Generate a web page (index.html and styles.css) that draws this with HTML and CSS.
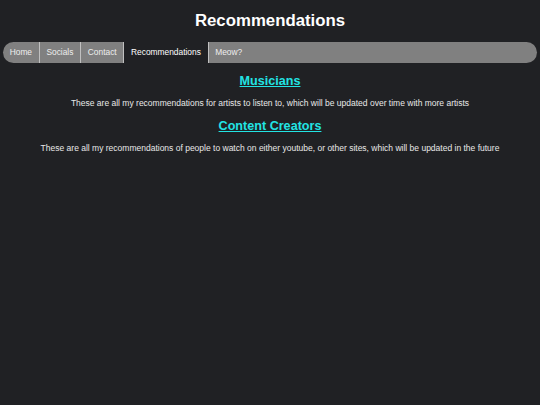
FILE: index.html
```html
<!DOCTYPE html>
<html>
<head>
<meta charset="utf-8">
<title>Recommendations</title>
<link rel="stylesheet" href="styles.css">
</head>
<body>
<h1 class="title">Recommendations</h1>
<ul class="nav">
  <li class="nav-item"><a href="#">Home</a></li>
  <li class="nav-item"><a href="#">Socials</a></li>
  <li class="nav-item"><a href="#">Contact</a></li>
  <li class="nav-item active"><a href="#">Recommendations</a></li>
  <li class="nav-item last"><a href="#">Meow?</a></li>
</ul>
<main class="content">
  <h2 class="section-title"><a href="#">Musicians</a></h2>
  <p class="section-text">These are all my recommendations for artists to listen to, which will be updated over time with more artists</p>
  <h2 class="section-title"><a href="#">Content Creators</a></h2>
  <p class="section-text">These are all my recommendations of people to watch on either youtube, or other sites, which will be updated in the future</p>
</main>
</body>
</html>
```
FILE: styles.css
```css
html, body {
  margin: 0;
  padding: 0;
  background: #202124;
}
body {
  padding: 0 3px;
  font-family: "Liberation Sans", Arial, sans-serif;
  font-size: 8.4px;
  color: #e8e8e8;
}
.title {
  margin: 0;
  padding-top: 11px;
  height: 42px;
  box-sizing: border-box;
  font-size: 16.8px;
  line-height: 19px;
  text-align: center;
  color: #ffffff;
  font-weight: bold;
}
.nav {
  list-style: none;
  margin: 0;
  padding: 0;
  display: flex;
  height: 21px;
  background: #808080;
  border-radius: 11px;
  overflow: hidden;
}
.nav-item {
  border-right: 1px solid #c0c0c0;
}
.nav-item.last {
  border-right: none;
}
.nav-item a {
  display: block;
  height: 21px;
  line-height: 21px;
  padding: 0 6.7px;
  color: #eeeeee;
  text-decoration: none;
}
.nav-item.active a {
  background: #202124;
  color: #ffffff;
}
.content {
  text-align: center;
}
.section-title {
  margin: 0;
  padding-top: 11px;
  font-size: 12.6px;
  line-height: 15px;
  font-weight: bold;
}
.section-title a {
  color: #22e4e4;
  text-decoration: underline;
}
.section-text {
  margin: 0;
  padding-top: 9px;
  font-size: 8.5px;
  line-height: 10px;
  color: #e8e8e8;
}
```
